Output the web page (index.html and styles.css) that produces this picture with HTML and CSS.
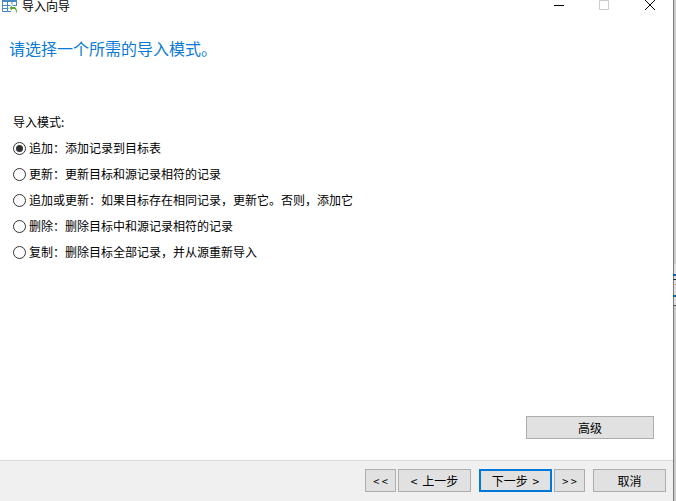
FILE: index.html
```html
<!DOCTYPE html>
<html lang="zh-CN">
<head>
<meta charset="utf-8">
<title>导入向导</title>
<link rel="stylesheet" href="styles.css">
</head>
<body>
<div class="window">
  <div class="titlebar">
    <svg class="app-icon" width="18" height="14" viewBox="0 0 18 14">
      <path d="M1 0H16V2H1Z" fill="#4a8ac4"/>
      <path d="M1.5 0V11.5H10M1.5 5.5H15.5M1.5 8.5H10M6.5 0V11.5M11 0V6M15.5 0V6" fill="none" stroke="#4a8ac4" stroke-width="1"/>
      <path d="M7 8L11.5 3.5V6H13C15.5 6 17 8.5 17 13H15C15 11 14.5 10 13 10H11.5V12.5Z" fill="#fff"/>
      <path d="M8.5 8L11 5.5V7H13C15 7 16 9 16 12.5H15C15 10.5 14.5 9 13 9H11V10.5Z" fill="#5aa832"/>
    </svg>
    <span class="title">导入向导</span>
    <div class="controls">
      <svg class="ctl" width="46" height="12" viewBox="0 0 46 12"><path d="M19 5.5H29" stroke="#000" fill="none"/></svg>
      <svg class="ctl" width="46" height="12" viewBox="0 0 46 12"><path d="M18.5 0.5H27.5V9.5H18.5Z" stroke="#ccc" fill="none"/></svg>
      <svg class="ctl" width="46" height="12" viewBox="0 0 46 12"><path d="M18 0L28 10M28 0L18 10" stroke="#000" fill="none"/></svg>
    </div>
  </div>
  <h1 class="heading">请选择一个所需的导入模式。</h1>
  <main class="content">
    <div class="group-label">导入模式:</div>
    <div class="options">
      <label class="option"><span class="radio checked"></span>追加：添加记录到目标表</label>
      <label class="option"><span class="radio"></span>更新：更新目标和源记录相符的记录</label>
      <label class="option"><span class="radio"></span>追加或更新：如果目标存在相同记录，更新它。否则，添加它</label>
      <label class="option"><span class="radio"></span>删除：删除目标中和源记录相符的记录</label>
      <label class="option"><span class="radio"></span>复制：删除目标全部记录，并从源重新导入</label>
    </div>
    <div class="advanced-row"><button class="btn advanced">高级</button></div>
  </main>
  <footer class="footer">
    <div class="pair">
      <button class="btn small">&lt; &lt;</button>
      <button class="btn wide">&lt; 上一步</button>
    </div>
    <div class="pair">
      <button class="btn wide primary">下一步 &gt;</button>
      <button class="btn small">&gt; &gt;</button>
    </div>
    <button class="btn wide">取消</button>
  </footer>
</div>
<div class="edge"></div>
</body>
</html>
```
FILE: styles.css
```css
* { box-sizing: border-box; }
html, body { margin: 0; height: 100%; overflow: hidden; }
body {
  display: flex;
  width: 676px;
  height: 501px;
  font-family: "Noto Sans CJK SC", "Liberation Sans", sans-serif;
  font-size: 12px;
  color: #000;
  background: #fff;
}
.window {
  width: 673px;
  height: 501px;
  display: flex;
  flex-direction: column;
  background: #fff;
}
.edge {
  width: 3px;
  background:
    linear-gradient(#0a64b4, #0a64b4) 0 274px / 3px 2px no-repeat,
    linear-gradient(#0a64b4, #0a64b4) 0 295px / 3px 2px no-repeat,
    linear-gradient(#1f3040, #1f3040) 0 279px / 3px 1px no-repeat,
    linear-gradient(#c87a20, #c87a20) 2px 284px / 1px 1px no-repeat,
    linear-gradient(#555, #555) 0 305px / 3px 1px no-repeat,
    linear-gradient(#7d7d7d, #7d7d7d) 0 0 / 1px 100% no-repeat,
    linear-gradient(#e0e0e0, #e0e0e0) 0 264px / 3px 41px no-repeat,
    #cbcbcb;
}
.titlebar {
  height: 14px;
  display: flex;
  align-items: flex-start;
}
.app-icon { margin-left: 1px; flex: none; }
.title { margin-left: 3px; line-height: 12px; font-size: 12px; }
.controls { margin-left: auto; display: flex; }
.ctl { display: block; }
.heading {
  margin: 0;
  padding: 24px 0 0 9px;
  font-size: 16px;
  font-weight: 400;
  line-height: 20px;
  color: #0a7ad6;
}
.content {
  flex: 1;
  display: flex;
  flex-direction: column;
  padding: 0 19px 21px 13px;
}
.group-label { margin-top: 55px; line-height: 18px; }
.options { display: flex; flex-direction: column; gap: 8px; margin-top: 8px; }
.option {
  display: flex;
  align-items: center;
  gap: 3px;
  height: 18px;
  line-height: 18px;
}
.radio {
  width: 13px;
  height: 13px;
  border: 1px solid #333;
  border-radius: 50%;
  background: #fff;
  flex: none;
  display: flex;
  align-items: center;
  justify-content: center;
}
.radio.checked::after {
  content: "";
  width: 7px;
  height: 7px;
  border-radius: 50%;
  background: #333;
}
.advanced-row { margin-top: auto; display: flex; justify-content: flex-end; }
.btn {
  font: inherit;
  height: 23px;
  padding: 0;
  background: #e1e1e1;
  border: 1px solid #adadad;
  color: #000;
  word-spacing: 2px;
}
.advanced { width: 128px; }
.footer {
  height: 41px;
  background: #f0f0f0;
  border-top: 1px solid #d8d8d8;
  display: flex;
  justify-content: flex-end;
  gap: 8px;
  padding: 8px 7px 0 0;
}
.pair { display: flex; gap: 2px; }
.small { width: 31px; word-spacing: 0; font-size: 11px; }
.wide { width: 73px; }
.primary { border: 2px solid #0078d7; }
```
